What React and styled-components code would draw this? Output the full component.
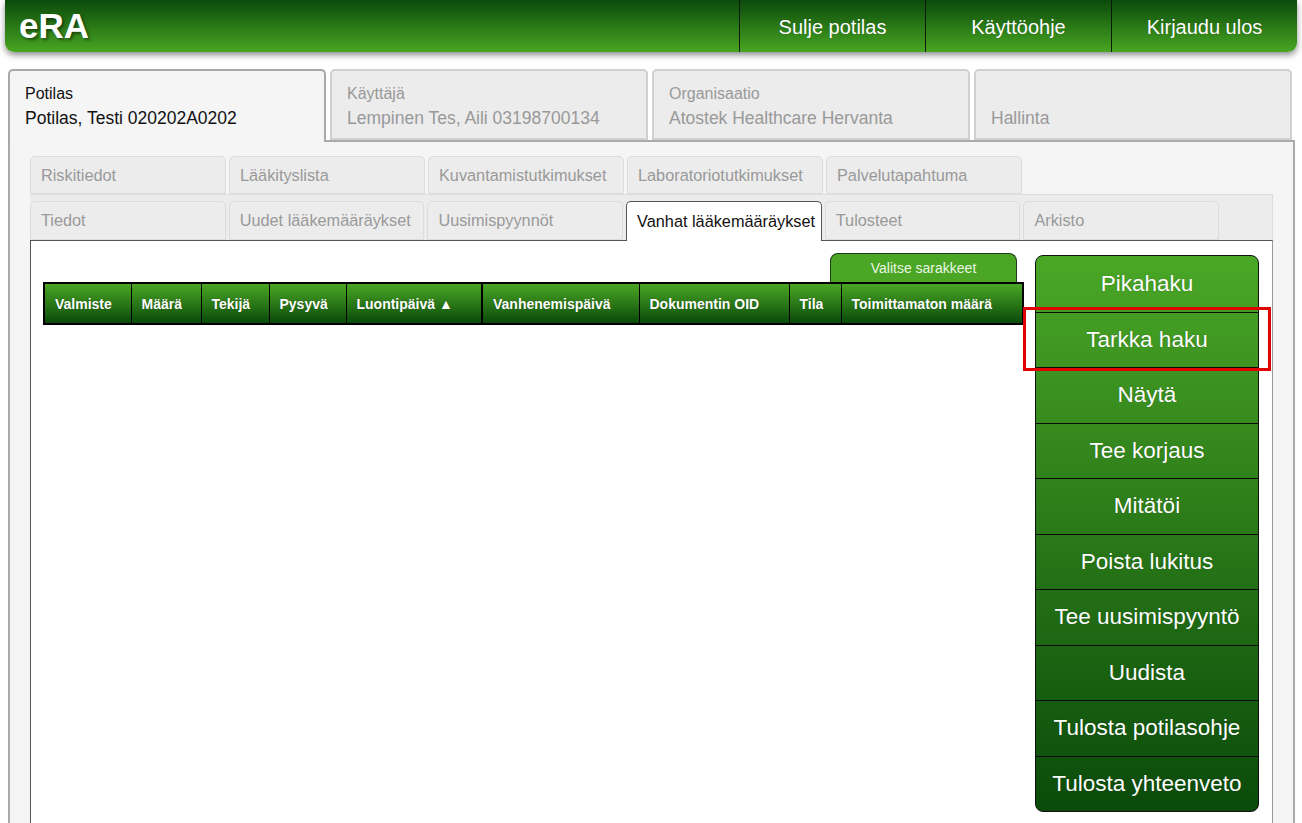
import React from "react";
import styled, { createGlobalStyle } from "styled-components";

const Global = createGlobalStyle`
  html, body { margin: 0; padding: 0; overflow: hidden; background: #fff; }
  body { font-family: "Liberation Sans", Arial, sans-serif; }
  * { box-sizing: border-box; }
`;

const Page = styled.div`
  padding: 0 5px;
`;

const Header = styled.header`
  height: 52px;
  display: flex;
  align-items: stretch;
  background: linear-gradient(#0b4a0b, #48a622);
  border-radius: 0 0 9px 9px;
  box-shadow: 0 3px 6px rgba(0, 0, 0, 0.45);
`;

const Logo = styled.div`
  flex: 1;
  padding-left: 14px;
  font-size: 35px;
  font-weight: bold;
  color: #fff;
  line-height: 52px;
  text-shadow: 2px 2px 3px rgba(0, 0, 0, 0.45);
`;

const NavItem = styled.div`
  width: 186px;
  border-left: 1px solid #0a1a0a;
  color: #fff;
  font-size: 20px;
  display: flex;
  align-items: center;
  justify-content: center;
  padding-top: 2px;
  text-shadow: 0 0 1px rgba(0, 0, 0, 0.3);
`;

const TopTabs = styled.div`
  display: flex;
  gap: 4px;
  margin: 17px 0 0 3px;
  position: relative;
  z-index: 1;
`;

const TopTab = styled.div`
  width: 318px;
  border: 2px solid ${(p) => (p.$active ? "#a9a9a9" : "#d0d0d0")};
  border-bottom: ${(p) => (p.$active ? "none" : "2px solid #d0d0d0")};
  border-radius: 5px 5px 0 0;
  background: ${(p) => (p.$active ? "#f5f5f5" : "#ececec")};
  padding: 14px 0 0 15px;
  color: ${(p) => (p.$active ? "#111" : "#999")};
  margin-bottom: ${(p) => (p.$active ? "-2px" : "0")};
  height: ${(p) => (p.$active ? "73px" : "71px")};
`;

const TabLabel = styled.div`
  font-size: 16px;
  line-height: 18px;
  height: 18px;
`;

const TabValue = styled.div`
  font-size: 17.5px;
  line-height: 20px;
  margin-top: 5px;
`;

const Outer = styled.div`
  margin: 0 2px 0 3px;
  border: 2px solid #aaaaaa;
  border-bottom: none;
  background: #f5f5f5;
  padding: 14px 20px 0 20px;
`;

const SubTabRow = styled.div`
  display: flex;
  gap: 3px;
`;

const SubStrip = styled.div`
  background: #ececec;
  border-top: 1px solid #dddddd;
  border-right: 1px solid #dddddd;
  padding-top: 6px;
  display: flex;
  gap: 3px;
`;

const SubTab = styled.div`
  width: ${(p) => p.$w}px;
  height: ${(p) => p.$h}px;
  margin-bottom: ${(p) => (p.$active ? "-1px" : "0")};
  border: 1px solid ${(p) => (p.$active ? "#555" : "#dcdcdc")};
  border-bottom: ${(p) => (p.$active ? "none" : "1px solid #dcdcdc")};
  border-radius: 5px 5px 0 0;
  background: ${(p) => (p.$active ? "#fff" : "#ececec")};
  color: ${(p) => (p.$active ? "#111" : "#999")};
  font-size: 16.3px;
  padding: 0 0 0 10px;
  display: flex;
  align-items: center;
  white-space: nowrap;
  position: relative;
  z-index: 1;
`;

const WhitePanel = styled.div`
  background: #fff;
  border-top: 1px solid #555;
  border-left: 1px solid #555;
  border-right: 1px solid #999;
  min-height: 640px;
  display: flex;
  padding: 12px 13px 0 12px;
  gap: 13px;
`;

const LeftCol = styled.div`
  flex: 1;
  min-width: 0;
  display: flex;
  flex-direction: column;
  padding-right: 2px;
`;

const ColumnsBtnRow = styled.div`
  display: flex;
  justify-content: flex-end;
  padding-right: 3px;
`;

const ColumnsBtn = styled.div`
  width: 187px;
  height: 29px;
  background: #4aa624;
  border: 1px solid #1d3d1a;
  border-bottom: none;
  border-radius: 8px 8px 0 0;
  color: #eaf6e4;
  font-size: 14px;
  display: flex;
  align-items: center;
  justify-content: center;
`;

const Table = styled.table`
  width: 100%;
  border-collapse: collapse;
  table-layout: fixed;
  border: 2px solid #000;
`;

const Th = styled.th`
  height: 41px;
  padding: 0 0 0 10px;
  text-align: left;
  font-size: 14px;
  font-weight: bold;
  color: #fff;
  white-space: nowrap;
  background: linear-gradient(#4aa624, #0a4a0a);
  border-left: ${(p) => (p.$thick ? 2 : 1)}px solid #000;
  text-shadow: 0 0 1px rgba(0, 0, 0, 0.4);
`;

const ButtonPanel = styled.div`
  flex: 0 0 224px;
  width: 224px;
  height: 557px;
  margin-top: 2px;
  display: grid;
  grid-template-rows: repeat(10, 1fr);
  border: 1px solid #111;
  border-radius: 8px;
  background: linear-gradient(#4aa726, #0a4a0a);
`;

const ActionButton = styled.div`
  position: relative;
  display: flex;
  align-items: center;
  justify-content: center;
  color: #fff;
  font-size: 22.5px;
  border-top: ${(p) => (p.$first ? "none" : "1px solid #0a0a0a")};
  text-shadow: 0 0 1px rgba(0, 0, 0, 0.35);
  white-space: nowrap;
`;

const Highlight = styled.div`
  position: absolute;
  left: -13px;
  right: -13px;
  top: -6px;
  bottom: -4px;
  border: 3px solid #e00000;
  pointer-events: none;
`;

const topTabs = [
  { label: "Potilas", value: "Potilas, Testi 020202A0202", active: true },
  { label: "Käyttäjä", value: "Lempinen Tes, Aili 03198700134" },
  { label: "Organisaatio", value: "Atostek Healthcare Hervanta" },
  { label: "", value: "Hallinta" },
];

const row1 = ["Riskitiedot", "Lääkityslista", "Kuvantamistutkimukset", "Laboratoriotutkimukset", "Palvelutapahtuma"];
const row2 = ["Tiedot", "Uudet lääkemääräykset", "Uusimispyynnöt", "Vanhat lääkemääräykset", "Tulosteet", "Arkisto"];

const columns = [
  { t: "Valmiste", w: 87 },
  { t: "Määrä", w: 70 },
  { t: "Tekijä", w: 68 },
  { t: "Pysyvä", w: 77 },
  { t: "Luontipäivä ▲", w: 136 },
  { t: "Vanhenemispäivä", w: 157, thick: true },
  { t: "Dokumentin OID", w: 150 },
  { t: "Tila", w: 52 },
  { t: "Toimittamaton määrä", w: 182 },
];

const actions = [
  "Pikahaku",
  "Tarkka haku",
  "Näytä",
  "Tee korjaus",
  "Mitätöi",
  "Poista lukitus",
  "Tee uusimispyyntö",
  "Uudista",
  "Tulosta potilasohje",
  "Tulosta yhteenveto",
];

export default function App() {
  return (
    <>
      <Global />
      <Page>
        <Header>
          <Logo>eRA</Logo>
          <NavItem>Sulje potilas</NavItem>
          <NavItem>Käyttöohje</NavItem>
          <NavItem>Kirjaudu ulos</NavItem>
        </Header>
        <TopTabs>
          {topTabs.map((t) => (
            <TopTab key={t.value} $active={t.active}>
              <TabLabel>{t.label}</TabLabel>
              <TabValue>{t.value}</TabValue>
            </TopTab>
          ))}
        </TopTabs>
        <Outer>
          <SubTabRow>
            {row1.map((t) => (
              <SubTab key={t} $w={196} $h={38}>{t}</SubTab>
            ))}
          </SubTabRow>
          <SubStrip>
            {row2.map((t, i) => (
              <SubTab key={t} $w={195.7} $h={i === 3 ? 40 : 39} $active={i === 3}>{t}</SubTab>
            ))}
          </SubStrip>
          <WhitePanel>
            <LeftCol>
              <ColumnsBtnRow>
                <ColumnsBtn>Valitse sarakkeet</ColumnsBtn>
              </ColumnsBtnRow>
              <Table>
                <colgroup>
                  {columns.map((c) => (
                    <col key={c.t} style={{ width: c.w }} />
                  ))}
                </colgroup>
                <thead>
                  <tr>
                    {columns.map((c) => (
                      <Th key={c.t} $thick={c.thick}>{c.t}</Th>
                    ))}
                  </tr>
                </thead>
              </Table>
            </LeftCol>
            <ButtonPanel>
              {actions.map((a, i) => (
                <ActionButton key={a} $first={i === 0}>
                  {a}
                  {a === "Tarkka haku" && <Highlight />}
                </ActionButton>
              ))}
            </ButtonPanel>
          </WhitePanel>
        </Outer>
      </Page>
    </>
  );
}
